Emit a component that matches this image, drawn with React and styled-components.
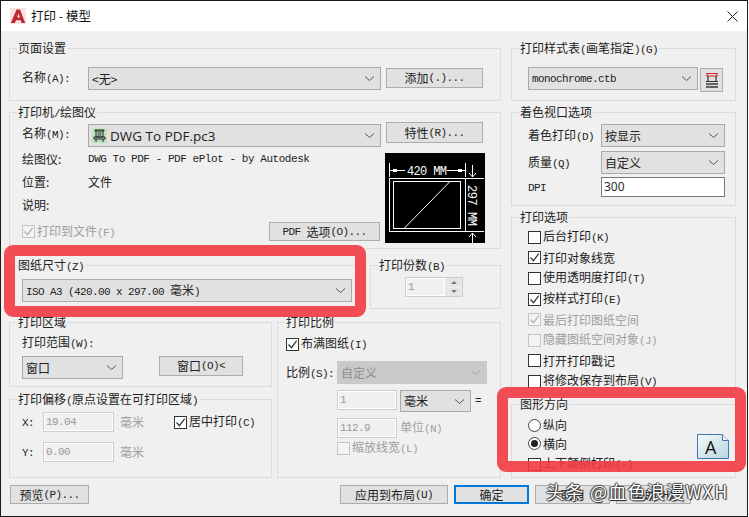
import React from "react";
import styled, { createGlobalStyle } from "styled-components";

const Global = createGlobalStyle`
  html, body { margin: 0; padding: 0; background: #fff; }
  body { width: 749px; height: 517px; overflow: hidden; }
  * { box-sizing: border-box; }
`;
const cjk = `"Noto Sans CJK SC", sans-serif`;
const Win = styled.div`
  position: relative; width: 748px; height: 517px; background: #f0f0f0;
  border: 1px solid #1a1a1a;
  display: flex; flex-direction: column;
  font: 12px/14px ${cjk}; color: #222;
`;
const TitleBar = styled.div`
  height: 30px; background: #fff; display: flex; align-items: center;
  padding: 0 9px; gap: 5px; font-size: 12.5px; color: #111;
`;
const TitleText = styled.span`flex: 1;`;
const Main = styled.div`display: flex; gap: 10px; padding: 17px 0 0 8px; height: 446px;`;
const Col = styled.div`display: flex; flex-direction: column; width: ${p => p.$w}px;`;
const Group = styled.div`
  position: relative; width: ${p => p.$w ? p.$w + "px" : "100%"}; height: ${p => p.$h}px;
  margin-top: ${p => p.$mt || 0}px; border: 1px solid #dcdcdc;
  padding: ${p => p.$pad || "0"};
  flex: none;
`;
const Legend = styled.div`
  position: absolute; top: -9px; left: 7px; background: #f0f0f0; padding: 0 1px;
  height: 15px; line-height: 15px; white-space: nowrap;
`;
const Row = styled.div`
  display: flex; align-items: ${p => p.$align || "center"}; gap: ${p => p.$gap || 0}px;
  margin-top: ${p => p.$mt || 0}px; height: ${p => p.$h ? p.$h + "px" : "auto"};
`;
const Label = styled.div`
  width: ${p => p.$w ? p.$w + "px" : "auto"}; flex: none; white-space: nowrap;
  color: ${p => p.$off ? "#a0a0a0" : "#222"};
  margin-left: ${p => p.$ml || 0}px;
  margin-top: ${p => p.$mt || 0}px;
`;
const Lat = styled.span`
  font-family: "Liberation Mono", monospace; font-size: 11px; white-space: pre;
  letter-spacing: ${p => p.$ls ?? -0.6}px;
`;
const SelectBox = styled.div`
  display: flex; align-items: center; justify-content: space-between; flex: none;
  width: ${p => p.$w}px; height: ${p => p.$h || 23}px;
  margin-top: ${p => p.$mt || 0}px; margin-left: ${p => p.$ml || 0}px;
  background: ${p => p.$off ? "#c9c9c9" : "#e1e1e1"};
  border: 1px solid ${p => p.$off ? "#c9c9c9" : "#a9a9a9"};
  padding: 0 5px 0 3px; color: ${p => p.$off ? "#8e8e8e" : "#222"}; white-space: nowrap;
`;
const SelectValue = styled.span`display: flex; align-items: center; gap: 3px;`;
const Sans = styled.span`font: 13.5px "Open Sans", sans-serif; color: #222;`;
const Btn = styled.div`
  display: flex; align-items: center; justify-content: center; flex: none;
  width: ${p => p.$w}px; height: ${p => p.$h || 19}px;
  margin-top: ${p => p.$mt || 0}px; margin-left: ${p => p.$ml || 0}px;
  background: #e1e1e1;
  border: ${p => p.$main ? "2px solid #0078d7" : "1px solid #adadad"};
  white-space: nowrap;
`;
const Input = styled.div`
  width: ${p => p.$w}px; height: ${p => p.$h || 20}px; flex: none;
  margin-left: ${p => p.$ml || 0}px;
  background: ${p => p.$on ? "#fff" : "#f0f0f0"};
  border: 1px solid ${p => p.$on ? "#7a7a7a" : "#cdcdcd"};
  box-shadow: ${p => p.$on ? "none" : "inset 0 0 0 1px #fff"};
  padding: 2px 2px; color: ${p => p.$on ? "#222" : "#9a9a9a"};
  font-family: ${p => p.$on ? `"Open Sans", sans-serif` : `"Liberation Mono", monospace`};
  font-size: ${p => p.$on ? "12px" : "11px"}; line-height: 14px;
  letter-spacing: ${p => p.$on ? 0 : -0.6}px;
`;
const Box = styled.div`
  width: 13px; height: 13px; flex: none; display: flex; align-items: center; justify-content: center;
  border: 1px solid ${p => p.$off ? "#c4c4c4" : "#333"};
  background: ${p => p.$off ? "#f4f4f4" : "#fff"};
`;
const CheckRow = styled.div`
  display: flex; align-items: center; gap: 2px; white-space: nowrap; height: ${p => p.$h || 20.6}px;
  margin-left: ${p => p.$ml || 0}px; flex: none;
  color: ${p => p.$off ? "#9e9e9e" : "#222"};
`;
const Radio = styled.div`
  width: 13px; height: 13px; border-radius: 50%; border: 1px solid #444; background: #fff; flex: none;
  display: flex; align-items: center; justify-content: center;
  &::after { content: ""; width: 7px; height: 7px; border-radius: 50%; background: ${p => p.$on ? "#222" : "transparent"}; }
`;
const Preview = styled.svg`width: 100px; height: 90px; display: block; flex: none; margin-top: 6px;`;
const Spin = styled.div`display: flex; width: 58px; height: 20px; border: 1px solid #cdcdcd; background: #f0f0f0;`;
const SpinVal = styled.div`flex: 1; padding: 2px; font: 11px/14px "Liberation Mono", monospace; color: #999; box-shadow: inset 0 0 0 1px #fff;`;
const SpinBtns = styled.div`width: 17px; display: flex; flex-direction: column; gap: 1px;`;
const SpinBtn = styled.div`flex: 1; background: #e6e6e6; display: flex; align-items: center; justify-content: center;`;
const Tri = styled.div`
  width: 0; height: 0; border-left: 3px solid transparent; border-right: 3px solid transparent;
  ${p => p.$down ? "border-top: 3px solid #777;" : "border-bottom: 3px solid #777;"}
`;
const Footer = styled.div`display: flex; gap: 6px; padding: 8px 56px 0 9px; align-items: flex-start;`;
const Spacer = styled.div`flex: 1;`;
const Highlight = styled.div`
  position: absolute; left: ${p => p.$l}px; top: ${p => p.$t}px; width: ${p => p.$w}px; height: ${p => p.$h}px;
  border: 11px solid rgba(242, 58, 68, .9); border-radius: 9px; pointer-events: none;
`;
const Watermark = styled.div`
  position: absolute; left: 545px; top: 479px; font: 18px/22px ${cjk}; color: #fff; white-space: nowrap;
  letter-spacing: 1.3px;
  text-shadow: 0 0 1px #222, 1px 1px 1px #222, -1px 0 1px #444, 0 -1px 1px #444;
`;
const DocIcon = styled.svg`position: absolute; right: 6px; bottom: 18px;`;

const Mix = ({ children }) => (
  <>
    {String(children).split(/([\x00-\x7F]+)/).map((s, i) =>
      i % 2 ? <Lat key={i}>{s}</Lat> : s
    )}
  </>
);
const Chevron = ({ c = "#555" }) => (
  <svg width="11" height="7" viewBox="0 0 11 7"><path d="M1 1.5l4.5 4 4.5-4" fill="none" stroke={c} strokeWidth="1" /></svg>
);
const Tick = ({ c = "#333" }) => (
  <svg width="11" height="11" viewBox="0 0 11 11"><path d="M1.5 5.5l3 3.2 5.2-7" fill="none" stroke={c} strokeWidth="1.2" /></svg>
);
const Check = ({ on, off, h, ml, children }) => (
  <CheckRow $off={off} $h={h} $ml={ml}>
    <Box $off={off}>{on && <Tick c={off ? "#b0b0b0" : "#333"} />}</Box>
    <span><Mix>{children}</Mix></span>
  </CheckRow>
);
const Select = ({ w, h, mt, ml, off, children }) => (
  <SelectBox $w={w} $h={h} $mt={mt} $ml={ml} $off={off}>
    <SelectValue>{children}</SelectValue>
    <Chevron c={off ? "#a8a8a8" : "#555"} />
  </SelectBox>
);

const Logo = () => (
  <svg width="16" height="16" viewBox="0 0 16 16">
    <rect width="16" height="16" fill="#f8e2e2" />
    <path d="M.8 15L6.500 1.500h3.500L15.200 15h-3.700l-.7-2.700H6.200L4.800 15z M7.200 9.500h2.700L8.500 5.200z" fill="#bf2a30" fillRule="evenodd" />
  </svg>
);
const CloseX = () => (
  <svg width="11" height="11" viewBox="0 0 11 11"><path d="M.5.5l10 10M10.5.5l-10 10" stroke="#222" strokeWidth="1" /></svg>
);
const PlotterIcon = () => (
  <svg width="15" height="15" viewBox="0 0 15 15">
    <rect width="15" height="15" fill="#bfe3c0" />
    <path d="M3 2h9v1H3zM4 3v6h7V3M2 9h11v2H2zM4 11v3M11 11v3M5.500 5h4M5.500 7h4" fill="none" stroke="#222" strokeWidth="1" />
  </svg>
);
const PenIcon = () => (
  <svg width="14" height="17" viewBox="0 0 14 17">
    <path d="M2 1.500h10M2 1v3h10V1" fill="none" stroke="#d22" strokeWidth="1.2" />
    <path d="M3 4v5M11 4v5M1 9.500h12" fill="none" stroke="#333" strokeWidth="1.2" />
    <path d="M1 12h12M1 15h12" stroke="#333" strokeWidth="1.600" />
    <path d="M4 11v5" stroke="#888" strokeWidth="1" />
  </svg>
);

const PaperPreview = () => (
  <Preview viewBox="0 0 100 90">
    <rect width="100" height="90" fill="#000" />
    <g fill="none" stroke="#fff" strokeWidth="1">
      <rect x="4.500" y="25.500" width="76" height="53" />
      <rect x="8.500" y="28.500" width="67" height="47" />
      <path d="M19 75.500L65 28.500" />
      <path d="M4.500 10v14M80.500 10v14M5 17.500h15M62 17.500h18M81 25.500h18M81 78.500h18M87.500 12v12M87.500 80v10M84 20l3.500 4 3.500-4M84 84l3.500-4 3.500 4" />
    </g>
    <rect x="8" y="16" width="4" height="3" fill="#fff" />
    <rect x="73" y="16" width="4" height="3" fill="#fff" />
    <text x="22" y="22" fill="#fff" fontFamily="Liberation Mono, monospace" fontSize="12" textLength="40">420 MM</text>
    <text transform="translate(83 32) rotate(90)" fill="#fff" fontFamily="Liberation Mono, monospace" fontSize="12" textLength="41">297 MM</text>
  </Preview>
);

const LandscapeDoc = () => (
  <DocIcon width="32" height="25" viewBox="0 0 32 25">
    <defs>
      <linearGradient id="d" x1="0" y1="0" x2="1" y2="1">
        <stop offset="0" stopColor="#f4fafb" /><stop offset="1" stopColor="#b9d6dc" />
      </linearGradient>
    </defs>
    <path d="M.5.500h25l6 6v18H.5z" fill="url(#d)" stroke="#3f78b0" />
    <path d="M25.500.500v6h6" fill="#e8f2f5" stroke="#3f78b0" />
    <text x="8" y="19.500" fontFamily="Open Sans, sans-serif" fontSize="18" fill="#111">A</text>
  </DocIcon>
);

export default function App() {
  return (
    <>
      <Global />
      <Win>
        <TitleBar>
          <Logo />
          <TitleText>打印 - 模型</TitleText>
          <CloseX />
        </TitleBar>
        <Main>
          <Col $w={492}>
            <Group $h={53} $pad="18px 0 0 12px">
              <Legend>页面设置</Legend>
              <Row $align="flex-start">
                <Label $w={66} $mt={3}><Mix>名称(A):</Mix></Label>
                <Select w={293}>&lt;无&gt;</Select>
                <Btn $w={97} $h={20} $ml={5} $mt={1}><Mix>添加(.)...</Mix></Btn>
              </Row>
            </Group>
            <Group $h={137} $mt={11} $pad="9px 0 0 12px">
              <Legend><Mix>打印机/绘图仪</Mix></Legend>
              <Row $align="flex-start">
                <Label $w={66} $mt={4}><Mix>名称(M):</Mix></Label>
                <Select w={293} mt={2}><PlotterIcon /><Sans>DWG To PDF.pc3</Sans></Select>
                <Btn $w={97} $h={21} $ml={5}><Mix>特性(R)...</Mix></Btn>
              </Row>
              <Row $align="flex-start" $gap={5}>
                <Col $w={358}>
                  <Row $h={23}><Label $w={66}>绘图仪:</Label><Lat $ls={-0.45}>DWG To PDF - PDF ePlot - by Autodesk</Lat></Row>
                  <Row $h={23}><Label $w={66}>位置:</Label><Label>文件</Label></Row>
                  <Row $h={23}><Label $w={66}>说明:</Label></Row>
                  <Row $mt={6} $h={19}>
                    <Check on off h={19}>打印到文件(F)</Check>
                    <Spacer />
                    <Btn $w={111}><Mix>PDF 选项(O)...</Mix></Btn>
                  </Row>
                </Col>
                <PaperPreview />
              </Row>
            </Group>
            <Row $align="flex-start" $gap={6} $mt={16}>
              <Group $w={355} $h={44} $pad="13px 0 0 12px">
                <Legend><Mix>图纸尺寸(Z)</Mix></Legend>
                <Select w={330}><span><Mix>ISO A3 (420.00 x 297.00 毫米)</Mix></span></Select>
              </Group>
              <Group $w={131} $h={44} $pad="11px 0 0 34px">
                <Legend><Mix>打印份数(B)</Mix></Legend>
                <Spin>
                  <SpinVal>1</SpinVal>
                  <SpinBtns><SpinBtn><Tri /></SpinBtn><SpinBtn><Tri $down /></SpinBtn></SpinBtns>
                </Spin>
              </Group>
            </Row>
            <Row $align="flex-start" $gap={5} $mt={13}>
              <Col $w={263}>
                <Group $h={65} $pad="12px 0 0 12px">
                  <Legend>打印区域</Legend>
                  <Label><Mix>打印范围(W):</Mix></Label>
                  <Row $align="flex-start" $mt={5} $gap={36}>
                    <Select w={101}>窗口</Select>
                    <Btn $w={84} $h={20}><Mix>窗口(O)&lt;</Mix></Btn>
                  </Row>
                </Group>
                <Group $h={79} $mt={12} $pad="12px 0 0 12px">
                  <Legend><Mix>打印偏移(原点设置在可打印区域)</Mix></Legend>
                  <Row $h={20}>
                    <Label $w={21}><Lat>X:</Lat></Label>
                    <Input $w={71}>19.04</Input>
                    <Label $off $ml={6}>毫米</Label>
                    <Check on h={20} ml={30}>居中打印(C)</Check>
                  </Row>
                  <Row $h={20} $mt={10}>
                    <Label $w={21}><Lat>Y:</Lat></Label>
                    <Input $w={71}>0.00</Input>
                    <Label $off $ml={6}>毫米</Label>
                  </Row>
                </Group>
              </Col>
              <Group $w={224} $h={156} $pad="11px 0 0 8px">
                <Legend>打印比例</Legend>
                <Check on h={20}>布满图纸(I)</Check>
                <Row $mt={7} $h={23}>
                  <Label $w={51}><Mix>比例(S):</Mix></Label>
                  <Select w={150} off>自定义</Select>
                </Row>
                <Row $align="flex-start" $mt={6}>
                  <Input $w={60} $ml={51}>1</Input>
                  <Select w={71} h={22} ml={3}>毫米</Select>
                  <Label $ml={4} $mt={2}><Lat>=</Lat></Label>
                </Row>
                <Row $mt={6}>
                  <Input $w={60} $ml={51}>112.9</Input>
                  <Label $off $ml={3}><Mix>单位(N)</Mix></Label>
                </Row>
                <Check off h={20} ml={51}>缩放线宽(L)</Check>
              </Group>
            </Row>
          </Col>
          <Col $w={225}>
            <Group $h={53} $pad="18px 0 0 16px">
              <Legend><Mix>打印样式表(画笔指定)(G)</Mix></Legend>
              <Row $align="flex-start" $gap={2}>
                <Select w={170}><Lat>monochrome.ctb</Lat></Select>
                <Btn $w={23} $h={24} $mt={1}><PenIcon /></Btn>
              </Row>
            </Group>
            <Group $h={94} $mt={11} $pad="11px 0 0 16px">
              <Legend>着色视口选项</Legend>
              <Row $h={23}><Label $w={73}><Mix>着色打印(D)</Mix></Label><Select w={124}>按显示</Select></Row>
              <Row $h={23} $mt={4}><Label $w={73}><Mix>质量(Q)</Mix></Label><Select w={124}>自定义</Select></Row>
              <Row $h={20} $mt={3}><Label $w={73}><Lat>DPI</Lat></Label><Input $w={124} $on>300</Input></Row>
            </Group>
            <Group $h={176} $mt={11} $pad="9px 0 0 16px">
              <Legend>打印选项</Legend>
              <Check>后台打印(K)</Check>
              <Check on>打印对象线宽</Check>
              <Check>使用透明度打印(T)</Check>
              <Check on>按样式打印(E)</Check>
              <Check on off>最后打印图纸空间</Check>
              <Check off>隐藏图纸空间对象(J)</Check>
              <Check>打开打印戳记</Check>
              <Check>将修改保存到布局(V)</Check>
            </Group>
            <Group $h={74} $mt={11} $pad="10px 0 0 16px">
              <Legend>图形方向</Legend>
              <CheckRow $h={20}><Radio /><span>纵向</span></CheckRow>
              <CheckRow $h={17}><Radio $on /><span>横向</span></CheckRow>
              <Check h={24}>上下颠倒打印(-)</Check>
              <LandscapeDoc />
            </Group>
          </Col>
        </Main>
        <Footer>
          <Btn $w={79}><Mix>预览(P)...</Mix></Btn>
          <Spacer />
          <Btn $w={108}><Mix>应用到布局(U)</Mix></Btn>
          <Btn $w={75} $main>确定</Btn>
          <Btn $w={75}>取消</Btn>
          <Btn $w={75}><Mix>帮助(H)</Mix></Btn>
        </Footer>
        <Highlight $l={3} $t={244} $w={362} $h={72} />
        <Highlight $l={496} $t={386} $w={249} $h={85} />
        <Watermark>头条 @血色浪漫WXH</Watermark>
      </Win>
    </>
  );
}
